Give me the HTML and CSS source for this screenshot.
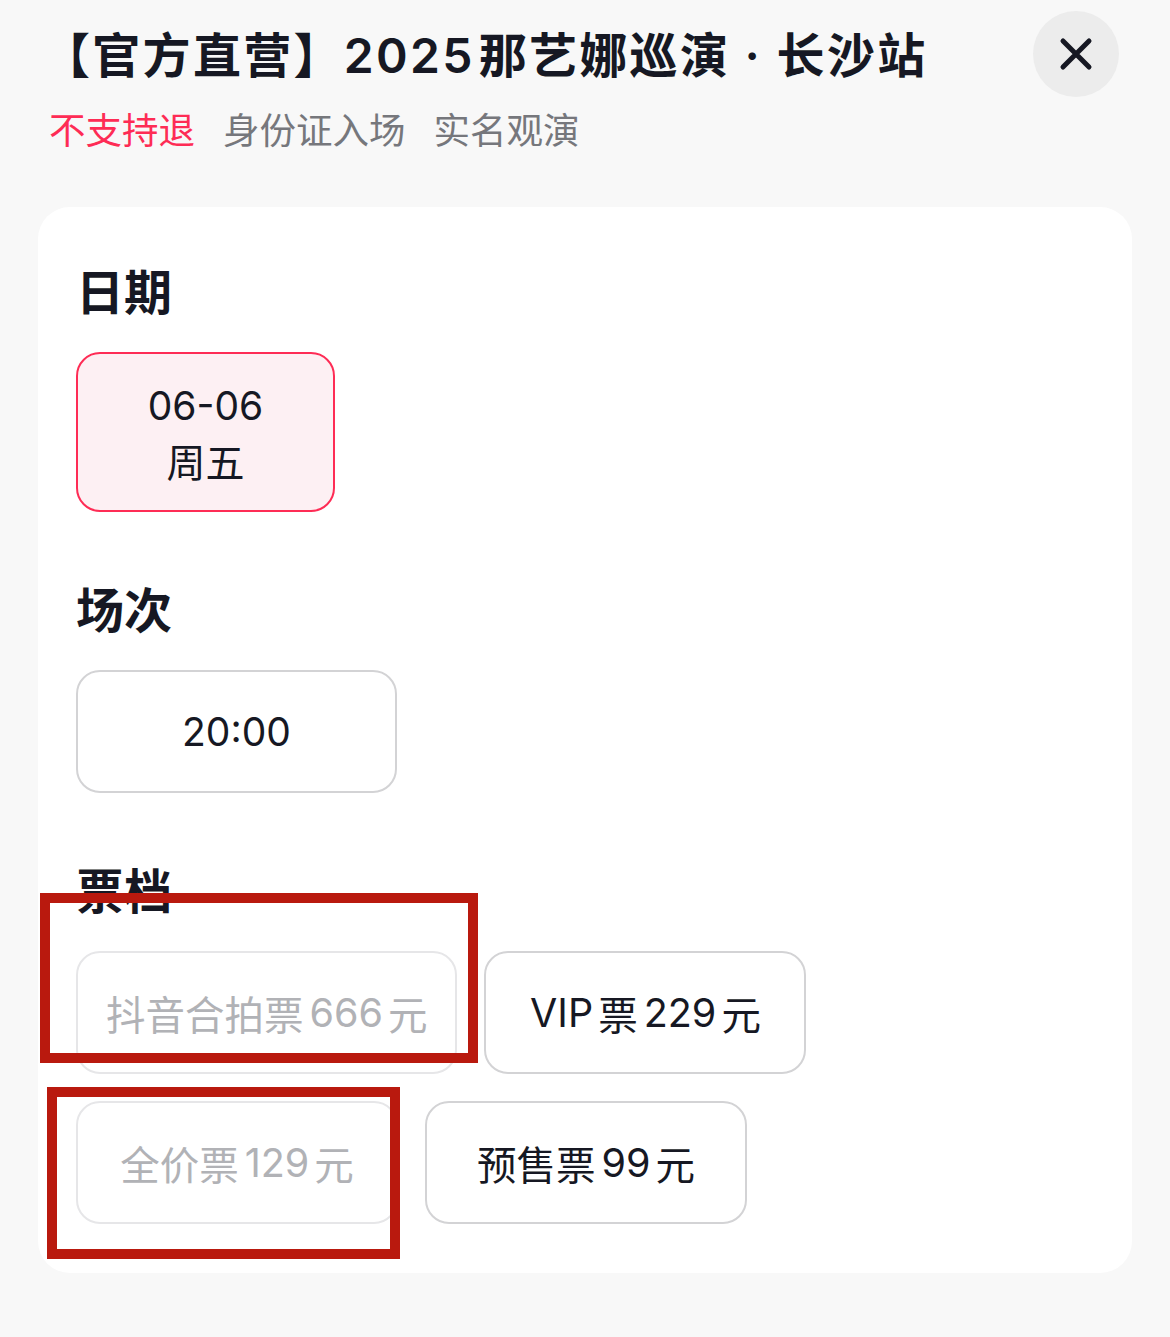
FILE: index.html
```html
<!DOCTYPE html>
<html lang="zh-CN">
<head>
<meta charset="utf-8">
<title>选择票档</title>
<link rel="stylesheet" href="styles.css">
</head>
<body>
<div class="sheet">
  <header class="header">
    <div class="head-text">
      <h1 class="title">【官方直营】<span class="num">2025</span>那艺娜巡演 · 长沙站</h1>
      <div class="tags">
        <span class="tag tag-red">不支持退</span>
        <span class="tag">身份证入场</span>
        <span class="tag">实名观演</span>
      </div>
    </div>
    <button class="close" aria-label="关闭">
      <svg width="34" height="34" viewBox="0 0 34 34"><path d="M4 4 L30 30 M30 4 L4 30" stroke="#161823" stroke-width="5" stroke-linecap="round" fill="none"/></svg>
    </button>
  </header>

  <main class="card">
    <section class="section">
      <h2 class="sec-title">日期</h2>
      <div class="options">
        <div class="opt opt-date selected">
          <span>06-06</span>
          <span>周五</span>
        </div>
      </div>
    </section>

    <section class="section">
      <h2 class="sec-title">场次</h2>
      <div class="options">
        <div class="opt opt-time">20:00</div>
      </div>
    </section>

    <section class="section">
      <h2 class="sec-title">票档</h2>
      <div class="options tickets">
        <div class="opt opt-ticket disabled">抖音合拍票<span class="num">666</span>元</div>
        <div class="opt opt-ticket">VIP<span class="sp"></span>票<span class="num">229</span>元</div>
        <div class="opt opt-ticket disabled">全价票<span class="num">129</span>元</div>
        <div class="opt opt-ticket">预售票<span class="num">99</span>元</div>
      </div>
    </section>
  </main>
</div>

<div class="mark mark-1"></div>
<div class="mark mark-2"></div>
</body>
</html>
```

FILE: styles.css
```css
* { box-sizing: border-box; }

html, body {
  margin: 0;
  padding: 0;
}

body {
  background: #f8f8f8;
  color: #161823;
  font-family: Inter, "Noto Sans CJK SC", "Noto Sans", sans-serif;
  width: 1170px;
  height: 1337px;
  overflow: hidden;
  position: relative;
}

.sheet {
  padding-bottom: 63px;
}

.header {
  display: flex;
  justify-content: space-between;
  align-items: flex-start;
  padding: 11px 51px 0 42px;
}

.title {
  margin: 12px 0 0;
  font-size: 48px;
  line-height: 65px;
  font-weight: 600;
  letter-spacing: 2.3px;
}

.title .num {
  margin: 0 4px 0 0;
}

.tags {
  display: flex;
  gap: 28px;
  margin-top: 18px;
  font-size: 36.5px;
  line-height: 50px;
  color: #76777c;
  padding-left: 7px;
}

.tag-red { color: #fe2c55; }

.close {
  width: 86px;
  height: 86px;
  border-radius: 50%;
  border: none;
  background: #ececec;
  display: flex;
  align-items: center;
  justify-content: center;
  padding: 0;
  flex-shrink: 0;
}

.card {
  margin: 51px 38px 0;
  background: #ffffff;
  border-radius: 32px;
  padding: 56px 38px 49px;
}

.section + .section {
  margin-top: 69px;
}

.sec-title {
  margin: 0 0 29px;
  font-size: 48px;
  line-height: 60px;
  font-weight: 600;
}

.options {
  display: flex;
  flex-wrap: wrap;
}

.tickets {
  gap: 27px 27px;
}

.opt {
  border: 2px solid #d3d3d5;
  border-radius: 24px;
  background: #fff;
  display: flex;
  align-items: center;
  justify-content: center;
  color: #161823;
  font-size: 38px;
}

.opt-date {
  width: 259px;
  height: 160px;
  flex-direction: column;
  line-height: 57px;
  font-size: 39px;
  padding-top: 3px;
}

.opt-date.selected {
  border-color: #fe2c55;
  background: #fdf0f3;
}

.opt-time {
  width: 321px;
  height: 123px;
  font-size: 39px;
}

.opt-ticket {
  min-width: 322px;
  height: 123px;
  padding: 0 28px;
  font-size: 39.5px;
}

.opt-ticket .num {
  margin: 0 5px 0 6px;
}

.opt-ticket .sp {
  display: inline-block;
  width: 5px;
}

.opt-ticket.disabled {
  color: #b1b2b6;
  border-color: #e6e6e8;
}

/* annotation boxes overlaid on screenshot */
.mark {
  position: absolute;
  border: 10px solid #b9190e;
  pointer-events: none;
}

.mark-1 {
  left: 40px;
  top: 893px;
  width: 438px;
  height: 170px;
}

.mark-2 {
  left: 47px;
  top: 1087px;
  width: 353px;
  height: 172px;
}
```
